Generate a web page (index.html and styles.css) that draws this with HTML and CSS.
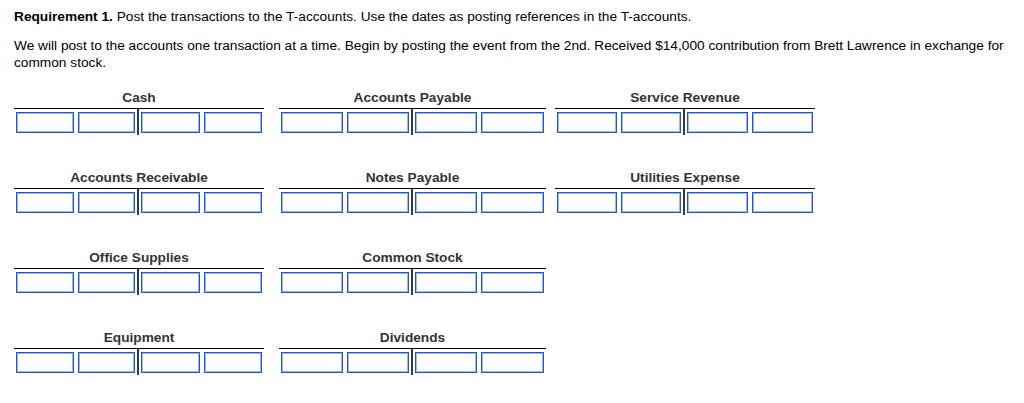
FILE: index.html
```html
<!DOCTYPE html>
<html>
<head>
<meta charset="utf-8">
<link rel="stylesheet" href="styles.css">
</head>
<body>
<div class="page">
  <p class="req"><b>Requirement 1.</b> Post the transactions to the T-accounts. Use the dates as posting references in the T-accounts.</p>
  <p class="intro">We will post to the accounts one transaction at a time. Begin by posting the event from the 2nd. Received $14,000 contribution from Brett Lawrence in exchange for common stock.</p>

  <div class="grid">
    <div class="trow">
      <div class="tacct w1">
        <div class="tname">Cash</div>
        <div class="tbody">
          <div class="tside debit"><input class="box"><input class="box"></div>
          <div class="tside credit"><input class="box"><input class="box"></div>
        </div>
      </div>
      <div class="tacct w2">
        <div class="tname">Accounts Payable</div>
        <div class="tbody">
          <div class="tside debit"><input class="box"><input class="box"></div>
          <div class="tside credit"><input class="box"><input class="box"></div>
        </div>
      </div>
      <div class="tacct w3">
        <div class="tname">Service Revenue</div>
        <div class="tbody">
          <div class="tside debit"><input class="box"><input class="box"></div>
          <div class="tside credit"><input class="box"><input class="box"></div>
        </div>
      </div>
    </div>

    <div class="trow">
      <div class="tacct w1">
        <div class="tname">Accounts Receivable</div>
        <div class="tbody">
          <div class="tside debit"><input class="box"><input class="box"></div>
          <div class="tside credit"><input class="box"><input class="box"></div>
        </div>
      </div>
      <div class="tacct w2">
        <div class="tname">Notes Payable</div>
        <div class="tbody">
          <div class="tside debit"><input class="box"><input class="box"></div>
          <div class="tside credit"><input class="box"><input class="box"></div>
        </div>
      </div>
      <div class="tacct w3">
        <div class="tname">Utilities Expense</div>
        <div class="tbody">
          <div class="tside debit"><input class="box"><input class="box"></div>
          <div class="tside credit"><input class="box"><input class="box"></div>
        </div>
      </div>
    </div>

    <div class="trow">
      <div class="tacct w1">
        <div class="tname">Office Supplies</div>
        <div class="tbody">
          <div class="tside debit"><input class="box"><input class="box"></div>
          <div class="tside credit"><input class="box"><input class="box"></div>
        </div>
      </div>
      <div class="tacct w2">
        <div class="tname">Common Stock</div>
        <div class="tbody">
          <div class="tside debit"><input class="box"><input class="box"></div>
          <div class="tside credit"><input class="box"><input class="box"></div>
        </div>
      </div>
    </div>

    <div class="trow">
      <div class="tacct w1">
        <div class="tname">Equipment</div>
        <div class="tbody">
          <div class="tside debit"><input class="box"><input class="box"></div>
          <div class="tside credit"><input class="box"><input class="box"></div>
        </div>
      </div>
      <div class="tacct w2">
        <div class="tname">Dividends</div>
        <div class="tbody">
          <div class="tside debit"><input class="box"><input class="box"></div>
          <div class="tside credit"><input class="box"><input class="box"></div>
        </div>
      </div>
    </div>
  </div>
</div>
</body>
</html>
```

FILE: styles.css
```css
html, body {
  margin: 0;
  padding: 0;
  background: #fff;
}

body {
  font-family: "Liberation Sans", Arial, Helvetica, sans-serif;
  font-size: 13.7px;
  line-height: 17px;
  color: #000;
}

.page {
  padding: 8px 4px 0 14px;
}

.req {
  margin: 0;
}

.intro {
  margin: 12px 0 0 0;
}

.grid {
  margin-top: 18px;
  display: flex;
  flex-direction: column;
  gap: 34px;
}

.trow {
  display: flex;
}

.tacct {
  flex: none;
}

.w1 { width: 250px; }
.w2 { width: 267px; margin-left: 15px; }
.w3 { width: 260px; margin-left: 9px; }

.tname {
  text-align: center;
  font-weight: bold;
  color: #333;
  padding-bottom: 2px;
}

.tbody {
  border-top: 1px solid #000;
  display: grid;
  grid-template-columns: minmax(0, 1fr) minmax(0, 1fr);
}

.tside {
  display: flex;
  gap: 4px;
  padding: 3px 2px 2px 2px;
  min-width: 0;
}

.debit {
  border-right: 2px solid #3a3a3a;
}

.box {
  flex: 1 1 0;
  width: 0;
  min-width: 0;
  height: 21px;
  margin: 0;
  padding: 0;
  box-sizing: border-box;
  border: 1px solid #1f56d2;
  box-shadow: inset 0 0 0 1px #9fb6ea;
  background: #fff;
  font: inherit;
  outline: none;
}
```
